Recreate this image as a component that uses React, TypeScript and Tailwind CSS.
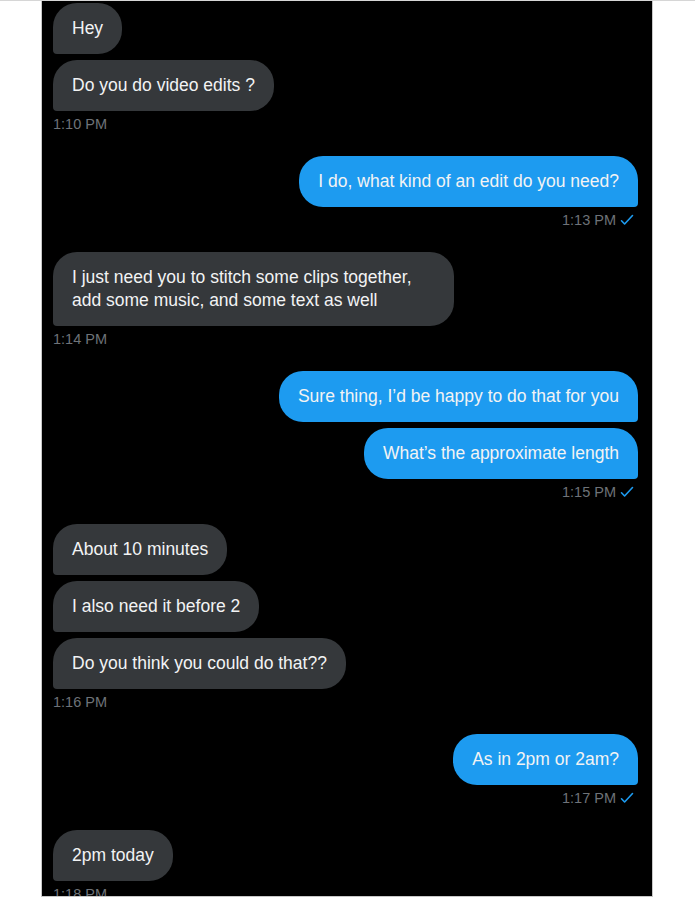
import React from "react";

type Msg = { text: React.ReactNode; key: string; w?: string };
type Group = { side: "in" | "out"; msgs: Msg[]; time: string };

const groups: Group[] = [
  { side: "in", msgs: [{ key: "a", text: "Hey" }, { key: "b", text: "Do you do video edits ?" }], time: "1:10 PM" },
  { side: "out", msgs: [{ key: "c", text: "I do, what kind of an edit do you need?" }], time: "1:13 PM" },
  {
    side: "in",
    msgs: [
      {
        key: "d",
        w: "w-[401px]",
        text: (
          <>
            I just need you to stitch some clips together,
            <br />
            add some music, and some text as well
          </>
        ),
      },
    ],
    time: "1:14 PM",
  },
  {
    side: "out",
    msgs: [
      { key: "e", text: "Sure thing, I’d be happy to do that for you" },
      { key: "f", text: "What’s the approximate length" },
    ],
    time: "1:15 PM",
  },
  {
    side: "in",
    msgs: [
      { key: "g", text: "About 10 minutes" },
      { key: "h", text: "I also need it before 2" },
      { key: "i", text: "Do you think you could do that??" },
    ],
    time: "1:16 PM",
  },
  { side: "out", msgs: [{ key: "j", text: "As in 2pm or 2am?" }], time: "1:17 PM" },
  { side: "in", msgs: [{ key: "k", text: "2pm today" }], time: "1:18 PM" },
];

function Check() {
  return (
    <svg width="14" height="12" viewBox="0 0 14 12" className="ml-[4px]" aria-hidden>
      <path d="M1.5 6.8 L4.6 10 L12.5 1.5" fill="none" stroke="#1d9bf0" strokeWidth="1.6" strokeLinecap="round" strokeLinejoin="round" />
    </svg>
  );
}

export default function App() {
  return (
    <div
      className="w-[695px] h-[900px] bg-white overflow-hidden border-t border-[#d6d6d6]"
      style={{ fontFamily: '"Liberation Sans", Arial, sans-serif' }}
    >
      <div className="ml-[41px] w-[612px] h-[896px] bg-black border-x border-b border-[#c8c8c8] overflow-hidden pl-[11px] pr-[14px] pt-[2px]">
        {groups.map((g, gi) => (
          <div key={gi} className={`flex flex-col ${g.side === "in" ? "items-start" : "items-end"} ${gi === 0 ? "" : "mt-[24px]"}`}>
            {g.msgs.map((m, mi) => (
              <div
                key={m.key}
                className={`${mi === 0 ? "" : "mt-[6px]"} ${m.w ?? ""} px-[19px] py-[14px] text-[17.5px] leading-[23px] text-[#f2f3f4] rounded-[24px] ${
                  g.side === "in" ? "bg-[#35383b] rounded-bl-[4px]" : "bg-[#1d9bf0] rounded-br-[4px]"
                }`}
              >
                {m.text}
              </div>
            ))}
            <div className={`mt-[5px] h-[16px] flex items-center text-[14.5px] leading-[16px] text-[#6e7378] ${g.side === "out" ? "pr-[4px]" : ""}`}>
              <span>{g.time}</span>
              {g.side === "out" && <Check />}
            </div>
          </div>
        ))}
      </div>
    </div>
  );
}
